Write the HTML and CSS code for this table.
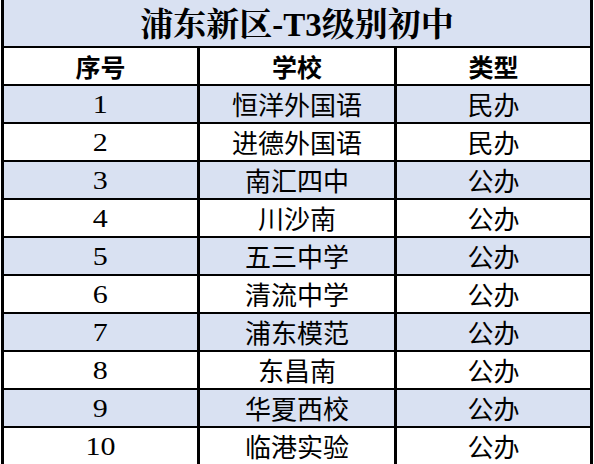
FILE: index.html
```html
<!DOCTYPE html>
<html lang="zh-CN">
<head>
<meta charset="utf-8">
<link rel="stylesheet" href="styles.css">
</head>
<body>
<div class="sheet">
  <div class="title">浦东新区-T3级别初中</div>
  <div class="cell head">序号</div>
  <div class="cell head">学校</div>
  <div class="cell head">类型</div>

  <div class="cell num blue"><span>1</span></div><div class="cell cn blue">恒洋外国语</div><div class="cell cn blue">民办</div>
  <div class="cell num"><span>2</span></div><div class="cell cn">进德外国语</div><div class="cell cn">民办</div>
  <div class="cell num blue"><span>3</span></div><div class="cell cn blue">南汇四中</div><div class="cell cn blue">公办</div>
  <div class="cell num"><span>4</span></div><div class="cell cn">川沙南</div><div class="cell cn">公办</div>
  <div class="cell num blue"><span>5</span></div><div class="cell cn blue">五三中学</div><div class="cell cn blue">公办</div>
  <div class="cell num"><span>6</span></div><div class="cell cn">清流中学</div><div class="cell cn">公办</div>
  <div class="cell num blue"><span>7</span></div><div class="cell cn blue">浦东模范</div><div class="cell cn blue">公办</div>
  <div class="cell num"><span>8</span></div><div class="cell cn">东昌南</div><div class="cell cn">公办</div>
  <div class="cell num blue"><span>9</span></div><div class="cell cn blue">华夏西校</div><div class="cell cn blue">公办</div>
  <div class="cell num"><span>10</span></div><div class="cell cn">临港实验</div><div class="cell cn">公办</div>
</div>
</body>
</html>
```
FILE: styles.css
```css
html, body {
  margin: 0;
  padding: 0;
  background: #ffffff;
}
body {
  width: 594px;
  height: 464px;
  overflow: hidden;
}
.sheet {
  margin-left: 1px;
  width: 592px;
  box-sizing: border-box;
  padding: 0 3px 2px 3px;
  background: #000000;
  display: grid;
  grid-template-columns: 193px 194px 193px;
  grid-template-rows: 46px;
  grid-auto-rows: 36px;
  column-gap: 3px;
  row-gap: 2px;
}
.title {
  grid-column: 1 / 4;
  background: #d9e1f2;
  display: flex;
  align-items: center;
  justify-content: center;
  padding-top: 5px;
  box-sizing: border-box;
  font-family: "Liberation Serif", "Noto Serif CJK SC", "Noto Sans CJK SC", serif;
  font-weight: bold;
  font-size: 33px;
  line-height: 1;
  color: #000;
}
.cell {
  background: #ffffff;
  display: flex;
  align-items: center;
  justify-content: center;
  color: #000;
  line-height: 1;
}
.blue { background: #d9e1f2; }
.head {
  font-family: "Noto Sans CJK SC", sans-serif;
  font-weight: bold;
  font-size: 25px;
}
.num {
  font-family: "Liberation Serif", serif;
  font-size: 25px;
}
.num span {
  display: inline-block;
  transform: scaleX(1.2);
}
.cn {
  font-family: "Noto Sans CJK SC", sans-serif;
  font-size: 26px;
}
```
